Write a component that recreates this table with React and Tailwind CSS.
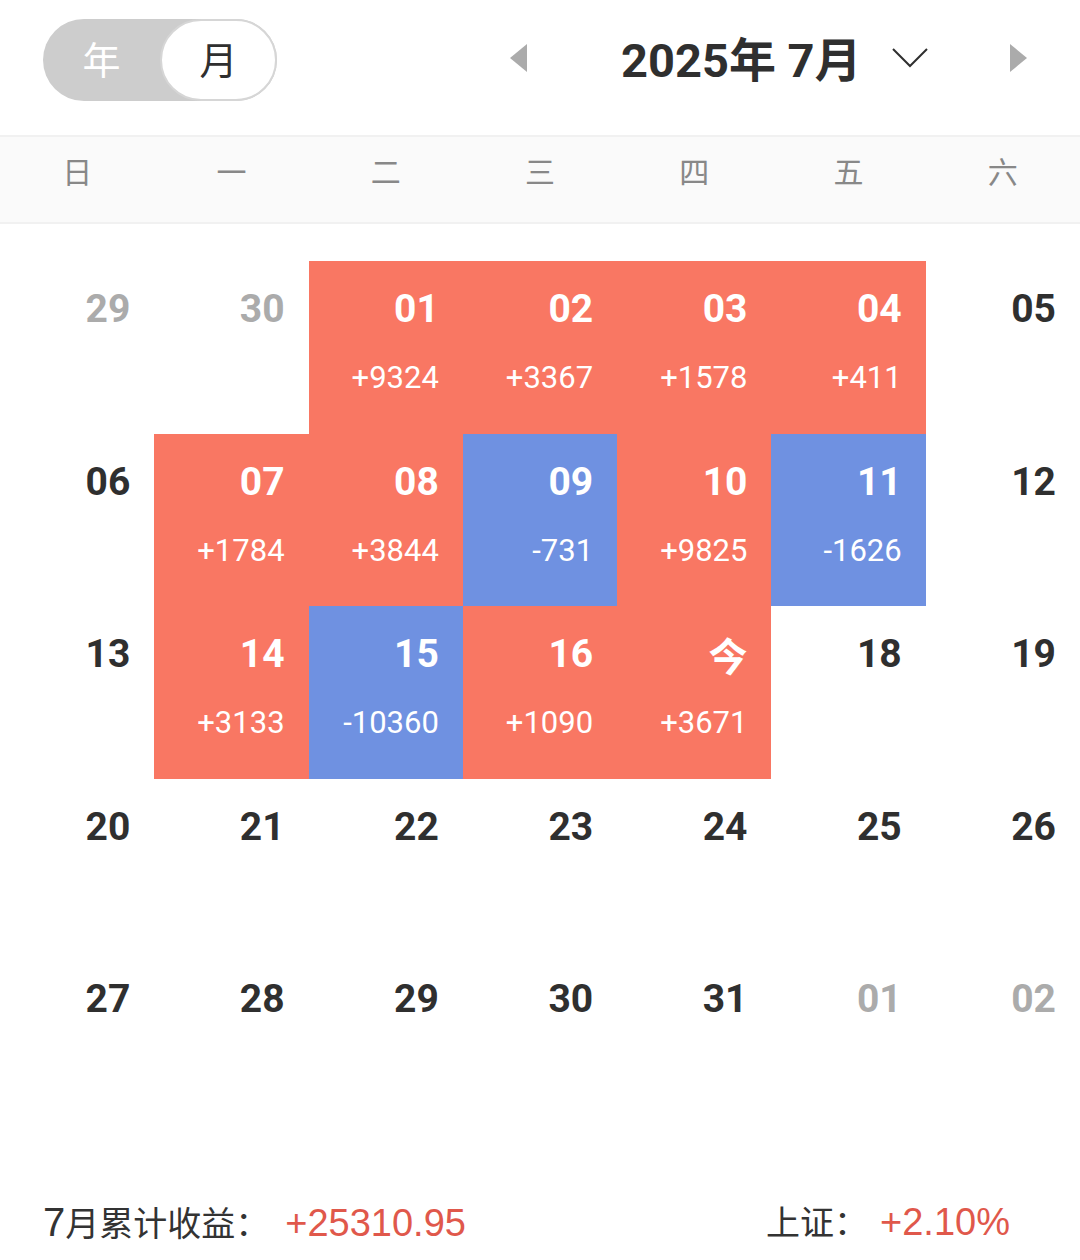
import React from "react";

const R = "bg-[#f97763]";
const B = "bg-[#6f91e1]";

const rows = [
  [
    { d: "29", muted: true },
    { d: "30", muted: true },
    { d: "01", v: "+9324", c: R },
    { d: "02", v: "+3367", c: R },
    { d: "03", v: "+1578", c: R },
    { d: "04", v: "+411", c: R },
    { d: "05" },
  ],
  [
    { d: "06" },
    { d: "07", v: "+1784", c: R },
    { d: "08", v: "+3844", c: R },
    { d: "09", v: "-731", c: B },
    { d: "10", v: "+9825", c: R },
    { d: "11", v: "-1626", c: B },
    { d: "12" },
  ],
  [
    { d: "13" },
    { d: "14", v: "+3133", c: R },
    { d: "15", v: "-10360", c: B },
    { d: "16", v: "+1090", c: R },
    { d: "今", v: "+3671", c: R, cjk: true },
    { d: "18" },
    { d: "19" },
  ],
  [
    { d: "20" }, { d: "21" }, { d: "22" }, { d: "23" }, { d: "24" }, { d: "25" }, { d: "26" },
  ],
  [
    { d: "27" }, { d: "28" }, { d: "29" }, { d: "30" }, { d: "31" },
    { d: "01", muted: true }, { d: "02", muted: true },
  ],
];

function Cell({ cell }) {
  const colored = !!cell.c;
  const numColor = colored ? "text-white" : cell.muted ? "text-[#ababab]" : "text-[#2f2f2f]";
  const font = cell.cjk
    ? "font-['Noto_Sans_CJK_SC','Noto_Sans',sans-serif]"
    : "font-['Roboto','Noto_Sans',sans-serif]";
  return (
    <div className={`h-[172.5px] flex flex-col items-end pr-[24px] pt-[24px] ${cell.c || ""}`}>
      <div className={`text-[39px] leading-[48px] font-bold ${numColor} ${font}`}>{cell.d}</div>
      {cell.v && (
        <div className="mt-[27px] text-[31px] leading-[36px] text-white font-['Roboto','Noto_Sans',sans-serif]">
          {cell.v}
        </div>
      )}
    </div>
  );
}

export default function App() {
  const weekdays = ["日", "一", "二", "三", "四", "五", "六"];
  return (
    <div className="w-[1080px] h-[1260px] bg-white overflow-hidden flex flex-col font-['Noto_Sans_CJK_SC','Noto_Sans',sans-serif]">
      {/* header */}
      <div className="h-[135px] flex items-start">
        <div className="mt-[19px] ml-[43px] w-[234px] h-[82px] rounded-full bg-[#cdcdcd] flex">
          <div className="w-[117px] h-full pb-[6px] flex items-center justify-center text-white text-[38px]">
            年
          </div>
          <div className="w-[117px] h-full pb-[6px] rounded-full bg-white border-2 border-[#d6d6d6] flex items-center justify-center text-[#2f2f2f] text-[38px]">
            月
          </div>
        </div>
        <div className="mt-[30px] ml-[233px] flex items-center h-[56px] flex-1">
          <svg width="18" height="28" viewBox="0 0 18 28">
            <polygon points="17,0 0,14 17,28" fill="#ababab" />
          </svg>
          <div className="ml-[93px] text-[47px] font-bold text-[#2f2f2f] leading-none font-['Roboto','Noto_Sans',sans-serif]">
            2025<span className="font-['Noto_Sans_CJK_SC',sans-serif]">年</span> 7
            <span className="font-['Noto_Sans_CJK_SC',sans-serif]">月</span>
          </div>
          <svg className="ml-[30px]" width="36" height="20" viewBox="0 0 36 20">
            <polyline points="1,1 18,18 35,1" fill="none" stroke="#2f2f2f" strokeWidth="2" />
          </svg>
          <svg className="ml-auto mr-[53px]" width="18" height="28" viewBox="0 0 18 28">
            <polygon points="1,0 18,14 1,28" fill="#ababab" />
          </svg>
        </div>
      </div>

      {/* weekday bar */}
      <div className="h-[89px] pb-[20px] bg-[#fafafa] border-y-2 border-[#f1f1f1] grid grid-cols-7 items-center">
        {weekdays.map((w) => (
          <div key={w} className="text-center text-[30px] leading-[30px] text-[#888888]">
            {w}
          </div>
        ))}
      </div>

      {/* calendar grid */}
      <div className="mt-[37px] grid grid-cols-7">
        {rows.flat().map((cell, i) => (
          <Cell key={i} cell={cell} />
        ))}
      </div>

      {/* footer */}
      <div className="mt-[63px] flex items-center justify-between pl-[43px] pr-[70px] h-[70px]">
        <div className="flex items-baseline text-[#333333]">
          <span className="text-[40px] leading-none font-['Liberation_Sans',sans-serif]">7</span>
          <span className="text-[34px] leading-none">月累计收益：</span>
          <span className="ml-[16px] text-[38px] leading-none text-[#e0584b] font-['Liberation_Sans',sans-serif]">
            +25310.95
          </span>
        </div>
        <div className="flex items-baseline text-[#333333]">
          <span className="text-[34px] leading-none">上证：</span>
          <span className="ml-[12px] text-[38px] leading-none text-[#e0584b] font-['Liberation_Sans',sans-serif]">
            +2.10%
          </span>
        </div>
      </div>
    </div>
  );
}
